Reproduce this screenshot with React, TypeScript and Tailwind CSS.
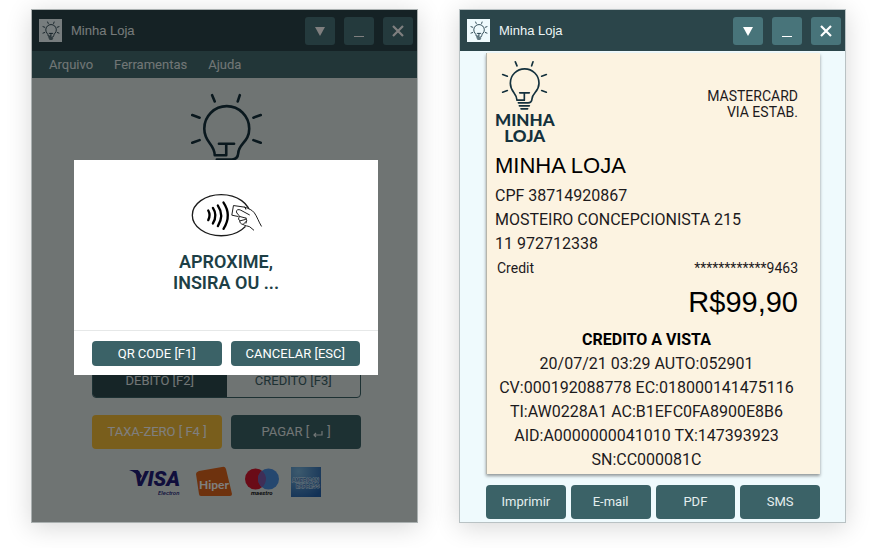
import type { ReactNode } from "react";

function BulbDrawing({ className, stroke = 5 }: { className: string; stroke?: number }) {
  return (
    <svg
      viewBox="150 175 147 155"
      className={className}
      fill="none"
      stroke="#14313d"
      strokeWidth={stroke}
      strokeLinecap="round"
      strokeLinejoin="round"
      aria-hidden="true"
    >
      <path d="M196 183l5 12M249 183l-4 12M158 221l14 5M289 221l-14 5M158 274l14-5M289 274l-14-5" />
      <path d="M209 276h29M223 276v22h-22c0-22-20-24-20-51a43 43 0 0 1 86 0c0 26-20 28-21 47q-1 12-12 12h-29" />
      <path d="M208 315h30M213 324h20" />
    </svg>
  );
}

function ContactlessDrawing() {
  return (
    <svg
      viewBox="390 125 220 140"
      className="h-[47px] w-[73px]"
      fill="none"
      stroke="#1c1c1c"
      strokeLinecap="round"
      strokeLinejoin="round"
      aria-hidden="true"
    >
      <ellipse cx="484" cy="194" rx="87" ry="62" strokeWidth="4" />
      <path
        d="M445 180q8 14 0 29M459 172q15 22 0 47M474 165q20 29 0 62M491 156q26 38 0 79"
        stroke="#000"
        strokeWidth="7"
      />
      <path d="M520 166l34 3 28 14 26 46-24 12-22-10-22-15-4-18-20-4z" fill="#fff" stroke="none" />
      <path
        d="M558 176l-2-6-35-5-5 29 19 4M569 193l-26-14c-7-4-14-1-13 5 0 5 8 8 9 15-4 4-3 10 1 11-1 7 4 11 10 12 7 5 13 4 20 7l12 10M555 170c12 4 22 8 29 17 8 11 13 27 21 40M540 198l19 5M541 211l16-4M551 221l9-9M559 203q4 6 0 15"
        strokeWidth="3"
      />
    </svg>
  );
}

function WindowButton({ label, children }: { label: string; children: ReactNode }) {
  return (
    <button
      type="button"
      aria-label={label}
      className="flex h-7 w-[30px] items-center justify-center rounded-[3px] bg-[#48747a] text-white"
    >
      {children}
    </button>
  );
}

function TitleBar() {
  return (
    <header className="flex h-[41px] items-center bg-[#2b454a] pr-1 pl-[7px]">
      <span className="flex size-[23px] items-center justify-center bg-[#effafd]">
        <BulbDrawing className="h-[19px] w-[18px]" stroke={7} />
      </span>
      <h1 className="ml-[9px] flex-1 font-['Liberation_Sans',Arial,sans-serif] text-[13px] text-[#eef5f6]">
        Minha Loja
      </h1>
      <div className="flex gap-[9px]">
        <WindowButton label="Recolher">
          <svg viewBox="0 0 10 10" className="size-[10px]" aria-hidden="true">
            <path d="M0 1h10L5 10z" fill="currentColor" />
          </svg>
        </WindowButton>
        <WindowButton label="Minimizar">
          <svg viewBox="0 0 10 12" className="h-3 w-[10px]" aria-hidden="true">
            <path d="M0 11.5h10" stroke="currentColor" />
          </svg>
        </WindowButton>
        <WindowButton label="Fechar">
          <svg viewBox="0 0 12 12" className="size-3" aria-hidden="true">
            <path d="M1 1l10 10M11 1L1 11" stroke="currentColor" strokeWidth="2.2" />
          </svg>
        </WindowButton>
      </div>
    </header>
  );
}

function CardBrands() {
  return (
    <div className="flex items-center justify-center gap-3 pr-1">
      <svg viewBox="0 0 54 32" className="h-8 w-[54px]" role="img" aria-label="Visa Electron">
        <path d="M0 4h9l4 6-3 4Q8 6 0 4z" fill="#211c78" />
        <text x="5" y="20" fontFamily="Roboto, sans-serif" fontWeight="900" fontStyle="italic" fontSize="21" fill="#211c78">
          VISA
        </text>
        <text x="29" y="29" fontFamily="Roboto, sans-serif" fontStyle="italic" fontWeight="500" fontSize="6" fill="#211c78">
          Electron
        </text>
      </svg>
      <svg viewBox="0 0 38 32" className="h-8 w-[38px]" role="img" aria-label="Hiper">
        <path d="M4 5L27 1q3-1 4 2l6 25q0 2-2 2H6q-2 0-2-2L1 8q0-2 3-3z" fill="#dd641c" />
        <text x="4" y="23" fontFamily="Lato, sans-serif" fontWeight="700" fontSize="12" fill="#fff">
          Hiper
        </text>
      </svg>
      <svg viewBox="0 0 34 32" className="h-8 w-[34px]" role="img" aria-label="Maestro">
        <circle cx="10.500" cy="13" r="10.500" fill="#d5172e" />
        <circle cx="23.500" cy="13" r="10.500" fill="#4a8fdf" />
        <path d="M17 4.750a10.500 10.500 0 0 1 0 16.500a10.500 10.500 0 0 1 0-16.500z" fill="#7e5cae" />
        <text x="6" y="29" fontFamily="Roboto, sans-serif" fontWeight="700" fontStyle="italic" fontSize="6" fill="#111">
          maestro
        </text>
      </svg>
      <svg viewBox="0 0 30 30" className="size-[30px]" role="img" aria-label="American Express">
        <defs>
          <radialGradient id="amex" cx="0.25" cy="0.15" r="1">
            <stop offset="0" stopColor="#78b4dc" />
            <stop offset="1" stopColor="#2462ac" />
          </radialGradient>
        </defs>
        <rect width="30" height="30" fill="url(#amex)" />
        <g fontFamily="Liberation Sans, sans-serif" fontWeight="700" fontSize="5" fill="#3978b6" stroke="#dcecf8" strokeWidth="0.800" paintOrder="stroke">
          <text x="1" y="15">AMERICAN</text>
          <text x="5" y="21">EXPRESS</text>
        </g>
      </svg>
    </div>
  );
}

const dialogButton = "h-[25px] flex-1 rounded-[4px] bg-[#3b6267] text-[13px] text-white";

function PaymentWindow() {
  return (
    <section className="relative flex flex-col border border-[#aab0b0] bg-[#dfe8e7] shadow-[0_4px_24px_rgba(0,0,0,0.16)]">
      <TitleBar />
      <nav className="flex h-[27px] items-center gap-[21px] bg-[#446c71] pl-[17px] text-[13px] text-[#e3ecec]">
        <a href="#arquivo">Arquivo</a>
        <a href="#ferramentas">Ferramentas</a>
        <a href="#ajuda">Ajuda</a>
      </nav>
      <div className="flex flex-1 flex-col justify-between pt-[13px] pr-[56px] pb-[24px] pl-[60px]">
        <BulbDrawing className="mx-auto h-[81px] w-[77px]" />
        <div className="flex flex-col gap-[17px]">
          <div className="flex h-[34px] overflow-hidden rounded-[4px] border border-[#3b6267] text-[13px]">
            <button type="button" className="flex-1 bg-[#2c4a4e] text-[#e3ecec]">DEBITO [F2]</button>
            <button type="button" className="flex-1 text-[#3b6267]">CREDITO [F3]</button>
          </div>
          <div className="flex h-[34px] gap-[9px] text-[13px]">
            <button type="button" className="flex-1 rounded-[4px] bg-[#f3bd38] text-white">TAXA-ZERO [ F4 ]</button>
            <button type="button" className="flex-1 rounded-[4px] bg-[#3b6267] text-[#e3ecec]">
              PAGAR [
              <svg viewBox="0 0 12 10" className="mx-[3px] inline h-[10px] w-3" fill="none" stroke="currentColor" strokeWidth="1.2" aria-label="Enter">
                <path d="M10 3v4H2M4 5L2 7l2 2" />
              </svg>
              ]
            </button>
          </div>
          <CardBrands />
        </div>
      </div>
      <div className="absolute inset-0 bg-black/50 pt-[150px] pr-[39px] pl-[42px]">
        <div role="dialog" aria-label="Pagamento" className="bg-white">
          <div className="flex h-[171px] flex-col items-center border-b border-[#e6e8e8] pt-[32px]">
            <ContactlessDrawing />
            <p className="mt-3 text-center text-[18px] leading-[21px] font-semibold text-[#1d3f46]">
              APROXIME,
              <br />
              INSIRA OU ...
            </p>
          </div>
          <div className="flex gap-[9px] px-[18px] pt-[10px] pb-[9px]">
            <button type="button" className={dialogButton}>QR CODE [F1]</button>
            <button type="button" className={dialogButton}>CANCELAR [ESC]</button>
          </div>
        </div>
      </div>
    </section>
  );
}

const details = [
  "20/07/21 03:29 AUTO:052901",
  "CV:000192088778 EC:018000141475116",
  "TI:AW0228A1 AC:B1EFC0FA8900E8B6",
  "AID:A0000000041010 TX:147393923",
  "SN:CC000081C",
];

const actions = ["Imprimir", "E-mail", "PDF", "SMS"];

function ReceiptWindow() {
  return (
    <section className="border border-[#b9c2c4] bg-[#effafd] shadow-[0_4px_24px_rgba(0,0,0,0.16)]">
      <TitleBar />
      <div className="pt-[2px] pr-[25px] pb-[3px] pl-[26px]">
        <article className="border-l border-[#b5b5ac] bg-[#fcf3e1] pr-[22px] pb-[2px] pl-2 text-[16px] leading-6 text-[#1c1a1c] shadow-[0_2px_3px_rgba(0,0,0,0.4)]">
          <div className="flex justify-between pt-[6px]">
            <div className="flex flex-col items-center">
              <BulbDrawing className="h-[52px] w-[49px]" stroke={5} />
              <p className="mt-px text-center font-['Lato',sans-serif] text-[17px] leading-4 font-black text-[#14313d]">
                MINHA
                <br />
                LOJA
              </p>
            </div>
            <p className="mt-[29px] text-right text-[14px] leading-4">
              MASTERCARD
              <br />
              VIA ESTAB.
            </p>
          </div>
          <h2 className="mt-2 font-['Liberation_Sans',Arial,sans-serif] text-[22px] leading-7 text-black">MINHA LOJA</h2>
          <p className="mt-1">CPF 38714920867</p>
          <p>MOSTEIRO CONCEPCIONISTA 215</p>
          <p>11 972712338</p>
          <div className="flex justify-between pl-[2px] text-[14px]">
            <span>Credit</span>
            <span>************9463</span>
          </div>
          <p className="mt-1 text-right font-['Liberation_Sans',Arial,sans-serif] text-[29px] leading-9 text-black">R$99,90</p>
          <div className="mt-2 text-center">
            <p className="font-bold text-black">CREDITO A VISTA</p>
            {details.map((line) => (
              <p key={line} className="whitespace-nowrap">{line}</p>
            ))}
          </div>
        </article>
        <div className="mt-[11px] grid grid-cols-4 gap-[5px]">
          {actions.map((label) => (
            <button key={label} type="button" className="h-[34px] rounded-[4px] bg-[#3b6267] text-[13px] text-[#e4eeee]">
              {label}
            </button>
          ))}
        </div>
      </div>
    </section>
  );
}

export default function App() {
  return (
    <main className="grid grid-cols-2 gap-[41px] bg-white pt-[9px] pr-[34px] pb-[25px] pl-[31px] font-['Roboto',sans-serif]">
      <PaymentWindow />
      <ReceiptWindow />
    </main>
  );
}
